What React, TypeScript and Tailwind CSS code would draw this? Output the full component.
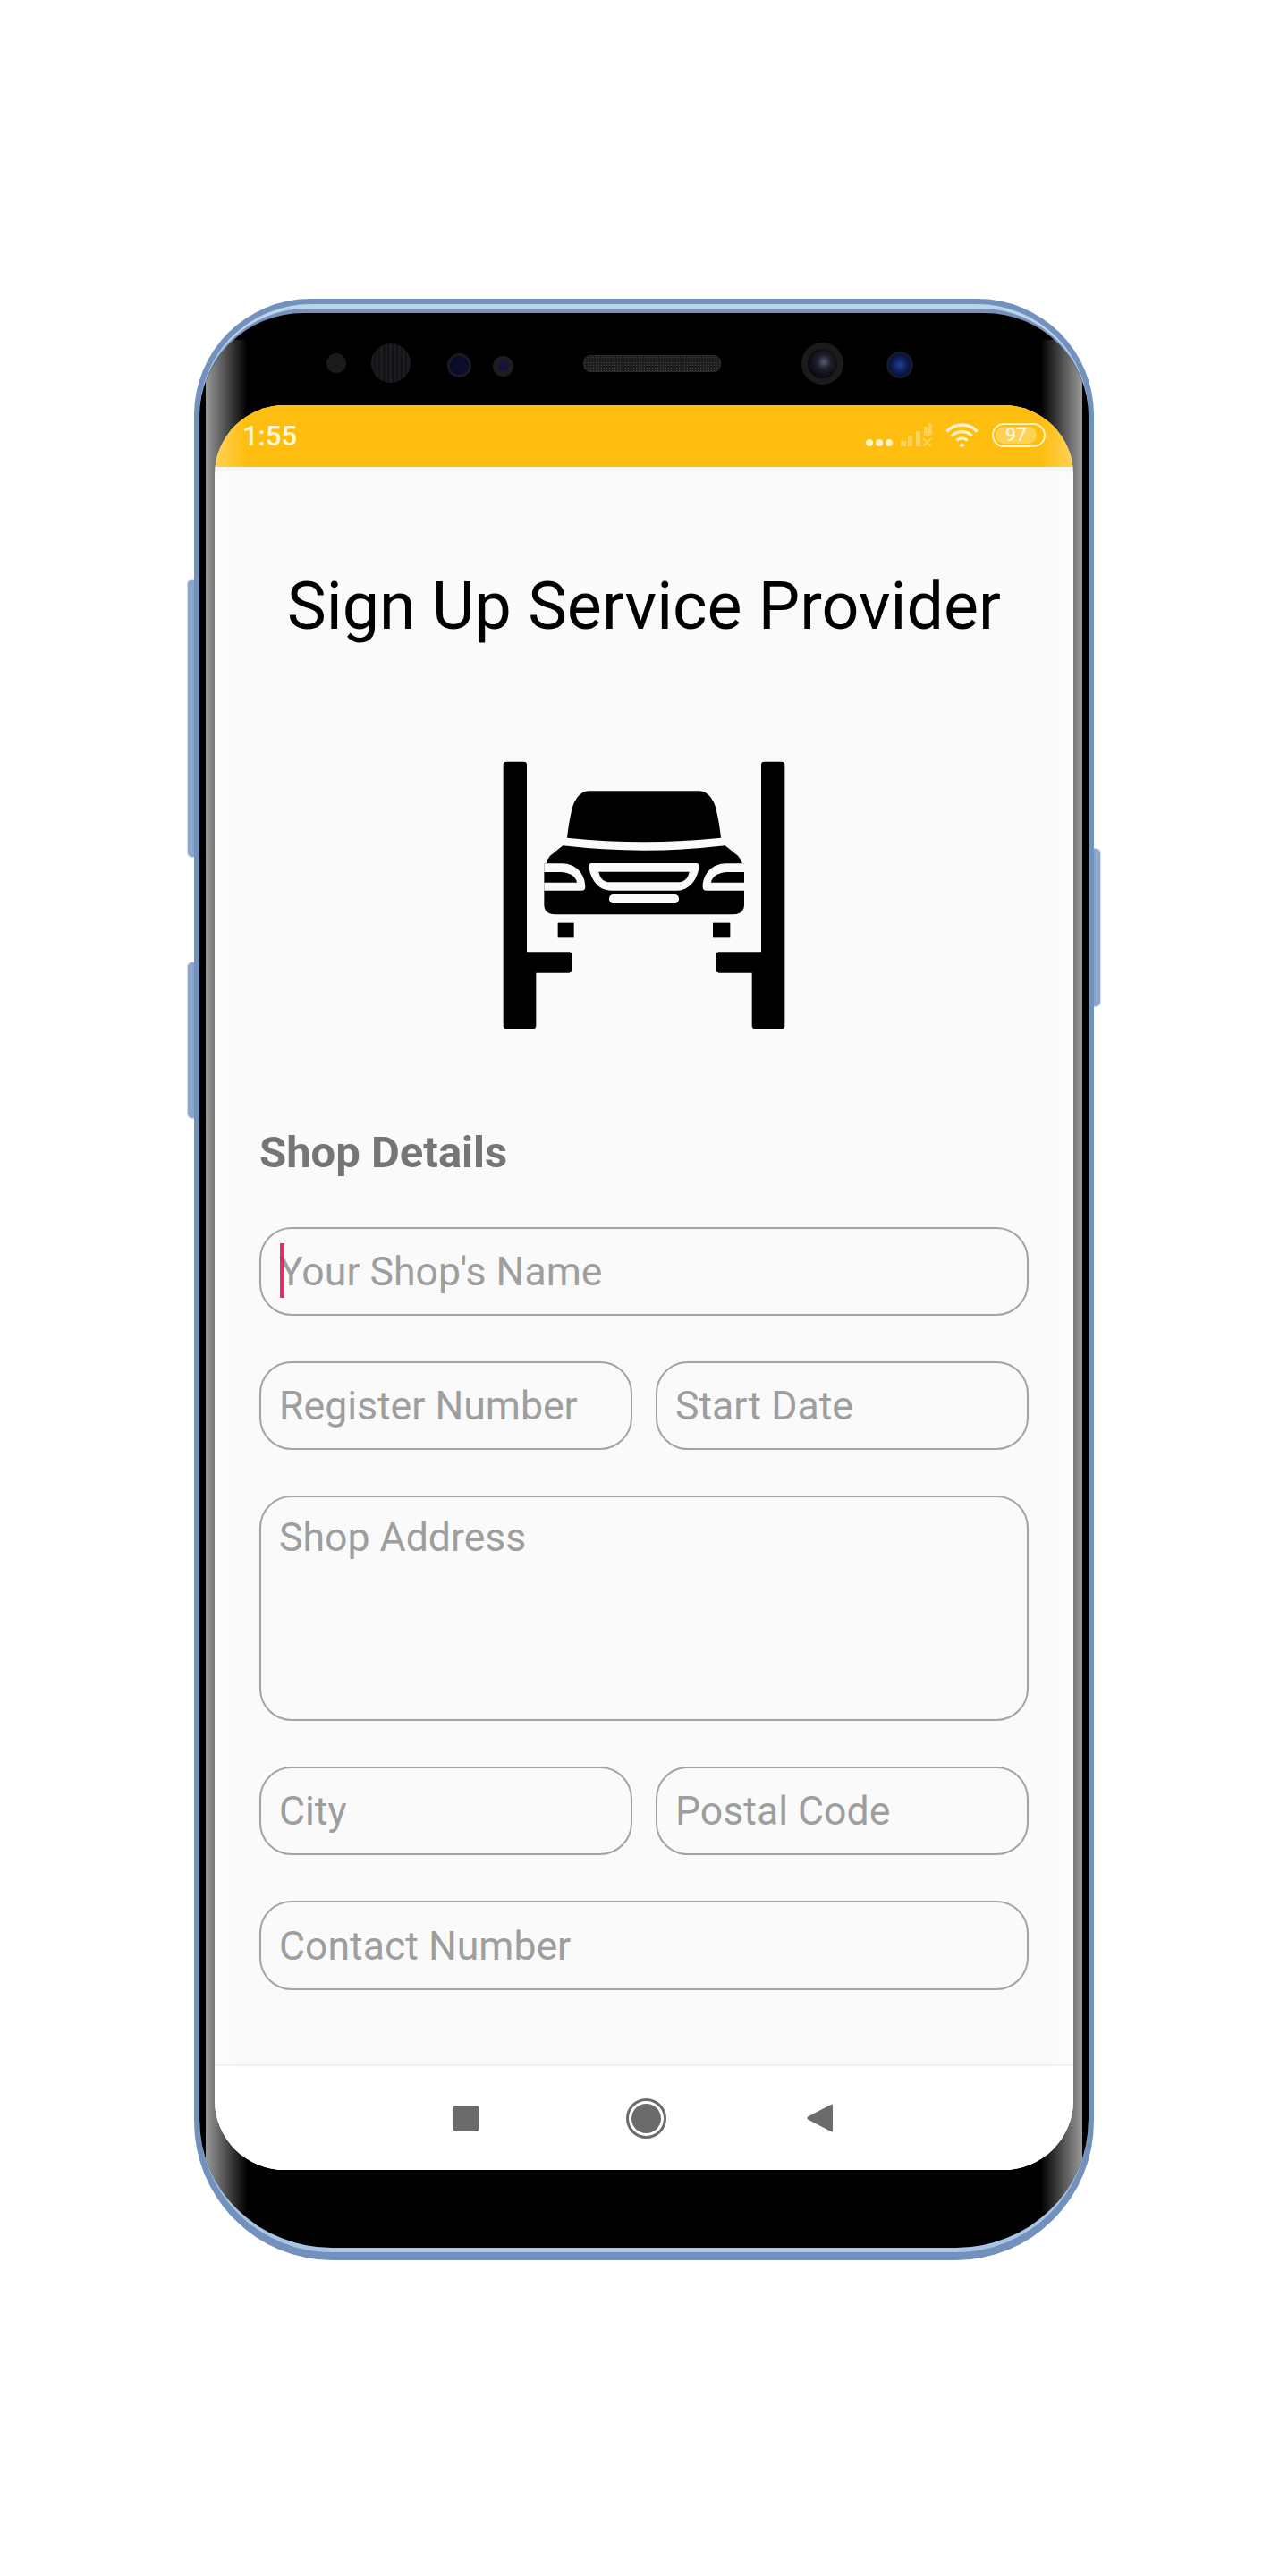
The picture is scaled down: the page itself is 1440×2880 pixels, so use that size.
function LiftIcon() {
  return (
    <svg viewBox="0 0 1080 1020" className="block mx-auto w-[360px] h-[340px]">
      <path fill="#000" d="M78 65H137a10 10 0 0 1 10 10V703H288a10 10 0 0 1 10 10V763a10 10 0 0 1-10 10H178V950a10 10 0 0 1-10 10H78a10 10 0 0 1-10-10V75a10 10 0 0 1 10-10Z" />
      <path fill="#000" d="M1002 65H943a10 10 0 0 0-10 10V703H792a10 10 0 0 0-10 10V763a10 10 0 0 0 10 10H902V950a10 10 0 0 0 10 10H1002a10 10 0 0 0 10-10V75a10 10 0 0 0-10-10Z" />
      <path fill="#000" d="M355 163H725C755 163 775 195 782 225C790 260 795 290 798 320C620 338 460 338 282 320C285 290 290 260 298 225C305 195 325 163 355 163Z" />
      <path fill="#000" d="M268 346Q540 378 812 346L855 380Q865 392 870 406H876V545Q876 577 835 577H245Q205 577 205 545V406H212Q215 392 225 380Z" />
      <path fill="#fafafa" d="M205 406H265C310 406 343 440 343 485Q343 497 330 497H205V470H315C312 450 290 435 260 435H205Z" />
      <path fill="#fafafa" d="M876 406H815C770 406 737 440 737 485Q737 497 750 497H876V470H765C768 450 790 435 820 435H876Z" />
      <path fill="#fafafa" fillRule="evenodd" d="M365 405H715Q727 405 725 418C718 465 690 497 650 497H430C390 497 362 465 355 418Q353 405 365 405ZM388 434C392 455 405 469 425 469H655C675 469 688 455 692 434Z" />
      <rect x="423" y="510" width="234" height="30" rx="14" fill="#fafafa" />
      <rect x="251" y="605" width="54" height="50" fill="#000" />
      <rect x="771" y="605" width="58" height="50" fill="#000" />
    </svg>
  );
}

function StatusIcons() {
  return (
    <div className="flex items-center text-[#fff3c9]">
      <div className="flex gap-[3px] mt-[18px]">
        <span className="w-[8px] h-[8px] rounded-full bg-[#fff3c9]" />
        <span className="w-[8px] h-[8px] rounded-full bg-[#fff3c9]" />
        <span className="w-[8px] h-[8px] rounded-full bg-[#fff3c9]" />
      </div>
      <svg viewBox="0 0 35 26" className="ml-[9px] w-[35px] h-[26px] opacity-40">
        <g fill="#fff3c9">
          <rect x="0" y="20" width="6" height="6" />
          <rect x="8" y="14" width="5" height="12" />
          <rect x="17" y="9" width="5" height="17" />
          <rect x="26" y="4" width="4" height="10" />
          <rect x="31" y="0" width="4" height="14" />
        </g>
        <path d="M25 17l9 9M34 17l-9 9" stroke="#fff3c9" strokeWidth="2" />
      </svg>
      <svg viewBox="0 0 37 27" className="ml-[15px] w-[37px] h-[27px]" fill="none" stroke="#fff3c9" strokeWidth="3.4">
        <path d="M1.5 9.5C11 -0.5 26 -0.5 35.5 9.5" />
        <path d="M7 14.5C13.5 8 23.5 8 30 14.5" />
        <path d="M12.5 19.5C16 16 21 16 24.5 19.5" />
        <path d="M18.5 22L22 25L18.5 27L15 25Z" fill="#fff3c9" stroke="none" />
      </svg>
      <div className="ml-[15px] w-[60px] h-[27px] rounded-full border-2 border-[#fff3c9] p-[2px]">
        <div className="h-full w-[46px] rounded-full bg-[#ffd154] flex items-center justify-center text-[21px] leading-none font-medium text-[#fff7dc]">
          97
        </div>
      </div>
    </div>
  );
}

function Field({ label, className }: { label: string; className: string }) {
  return (
    <div className={"rounded-[36px] border-[2.5px] border-[#a3a3a3] pl-[20px] text-[44.6px] text-[#9e9e9e] " + className}>
      <span className="relative top-[1px]">{label}</span>
    </div>
  );
}

export default function App() {
  return (
    <div className="bg-white h-[2880px] pt-[334px] font-[Roboto,sans-serif]">
      <div className="relative mx-auto w-[1006px] h-[2193px] rounded-t-[130px] rounded-b-[155px] bg-[#7391bd] pt-[6px] px-[6px] pb-[9px]">
        {/* side buttons */}
        <div className="absolute left-[-8px] top-[313px] w-[8px] h-[312px] rounded-l-[6px] bg-[#8ba5cc] border border-r-0 border-[#d3e0f2]" />
        <div className="absolute left-[-8px] top-[741px] w-[8px] h-[176px] rounded-l-[6px] bg-[#8ba5cc] border border-r-0 border-[#d3e0f2]" />
        <div className="absolute right-[-8px] top-[614px] w-[8px] h-[178px] rounded-r-[6px] bg-[#8ba5cc] border border-l-0 border-[#d3e0f2]" />

        <div className="h-full rounded-t-[124px] rounded-b-[148px] bg-[#b9d5ec] pt-[5px]">
          <div className="h-full rounded-t-[120px] rounded-b-[148px] bg-[#7b90b6] pt-[5px]">
            <div className="relative h-full rounded-t-[116px] rounded-b-[148px] overflow-hidden bg-black border-b-[5px] border-[#a9c5e5] px-[17px] flex flex-col">
              <div className="absolute left-[7px] top-[30px] bottom-[40px] w-[46px] bg-gradient-to-r from-[#9a9a9a] to-transparent" />
              <div className="absolute right-[7px] top-[30px] bottom-[40px] w-[46px] bg-gradient-to-l from-[#9a9a9a] to-transparent" />

              {/* top bezel */}
              <div className="relative h-[103px] shrink-0 flex items-center pt-[9px] -mx-[17px]">
                <span className="ml-[142px] w-[22px] h-[22px] rounded-full bg-[#1b1b1c]" />
                <span className="ml-[28px] w-[44px] h-[44px] rounded-full bg-[repeating-linear-gradient(90deg,#1c1c20_0px,#1c1c20_3px,#131316_3px,#131316_5px)]" />
                <span className="ml-[41px] w-[27px] h-[27px] mt-[4px] rounded-full border-[3px] border-[#1a1a24] bg-[#0b0b2a]" />
                <span className="ml-[24px] w-[23px] h-[23px] mt-[6px] rounded-full border-[6px] border-[#1c1c22] bg-[#14143a]" />
                <span className="ml-[78px] w-[154px] h-[19px] rounded-[8px] border border-[#2b2b2b] bg-[#1e1e1e] bg-[radial-gradient(#444444_1px,transparent_1px)] bg-[length:3px_3px]" />
                <span className="ml-[90px] w-[47px] h-[47px] rounded-full border-[7px] border-[#1b1b1b] bg-[radial-gradient(circle_at_55%_45%,#5a5a78_0,#20202c_30%,#08080c_70%)]" />
                <span className="ml-[48px] w-[30px] h-[30px] mt-[3px] rounded-full border-[3px] border-[#15192a] bg-[radial-gradient(circle_at_50%_50%,#1f3f8f_0,#0a1a50_55%,#050814_100%)]" />
              </div>

              {/* screen */}
              <div className="relative h-[1973px] shrink-0 rounded-[78px] overflow-hidden bg-[#fafafa] flex flex-col">
                <div className="h-[69px] shrink-0 bg-[#ffbe0f] flex items-center justify-between pl-[31px] pr-[31px]">
                  <span className="text-[31px] leading-none font-medium text-[#fff7dc]">1:55</span>
                  <div className="mt-[-3px]">
                    <StatusIcons />
                  </div>
                </div>

                <div className="flex-1 px-[50px]">
                  <h1 className="mt-[114px] text-center text-[73.6px] leading-[84px] font-normal text-black">
                    Sign Up Service Provider
                  </h1>
                  <div className="mt-[110px]">
                    <LiftIcon />
                  </div>
                  <h2 className="mt-[91px] text-[49px] leading-[56px] font-bold text-[#757575]">Shop Details</h2>
                  <div className="mt-[55px] flex flex-col gap-[51px]">
                    <div className="relative">
                      <Field label="Your Shop's Name" className="h-[99px] flex items-center" />
                      <span className="absolute left-[23px] top-[18px] w-[5px] h-[61px] bg-[#d81b60]/90" />
                    </div>
                    <div className="flex gap-[26px]">
                      <Field label="Register Number" className="h-[99px] flex-1 flex items-center" />
                      <Field label="Start Date" className="h-[99px] flex-1 flex items-center" />
                    </div>
                    <Field label="Shop Address" className="h-[252px] pt-[11px]" />
                    <div className="flex gap-[26px]">
                      <Field label="City" className="h-[99px] flex-1 flex items-center" />
                      <Field label="Postal Code" className="h-[99px] flex-1 flex items-center" />
                    </div>
                    <Field label="Contact Number" className="h-[100px] flex items-center" />
                  </div>
                </div>

                {/* nav bar */}
                <div className="h-[118px] shrink-0 bg-white border-t-2 border-[#eeeeee] flex items-start pt-[36px]">
                  <span className="ml-[267px] mt-[8px] w-[28px] h-[29px] rounded-[2px] bg-[#6b6b6b]" />
                  <span className="ml-[165px] w-[45px] h-[45px] rounded-full border-[3px] border-[#6b6b6b] p-[3px]">
                    <span className="block w-full h-full rounded-full bg-[#6b6b6b]" />
                  </span>
                  <svg viewBox="0 0 29 32" className="ml-[157px] mt-[6px] w-[29px] h-[32px]">
                    <path d="M28 0.5Q29 0 29 2V30Q29 32 28 31.5L1 17.5Q0 16 1 14.5Z" fill="#6b6b6b" />
                  </svg>
                </div>

                <div className="absolute inset-y-0 left-0 w-[36px] bg-gradient-to-r from-white/30 to-transparent" />
                <div className="absolute inset-y-0 right-0 w-[36px] bg-gradient-to-l from-white/30 to-transparent" />
              </div>
            </div>
          </div>
        </div>
      </div>
    </div>
  );
}
